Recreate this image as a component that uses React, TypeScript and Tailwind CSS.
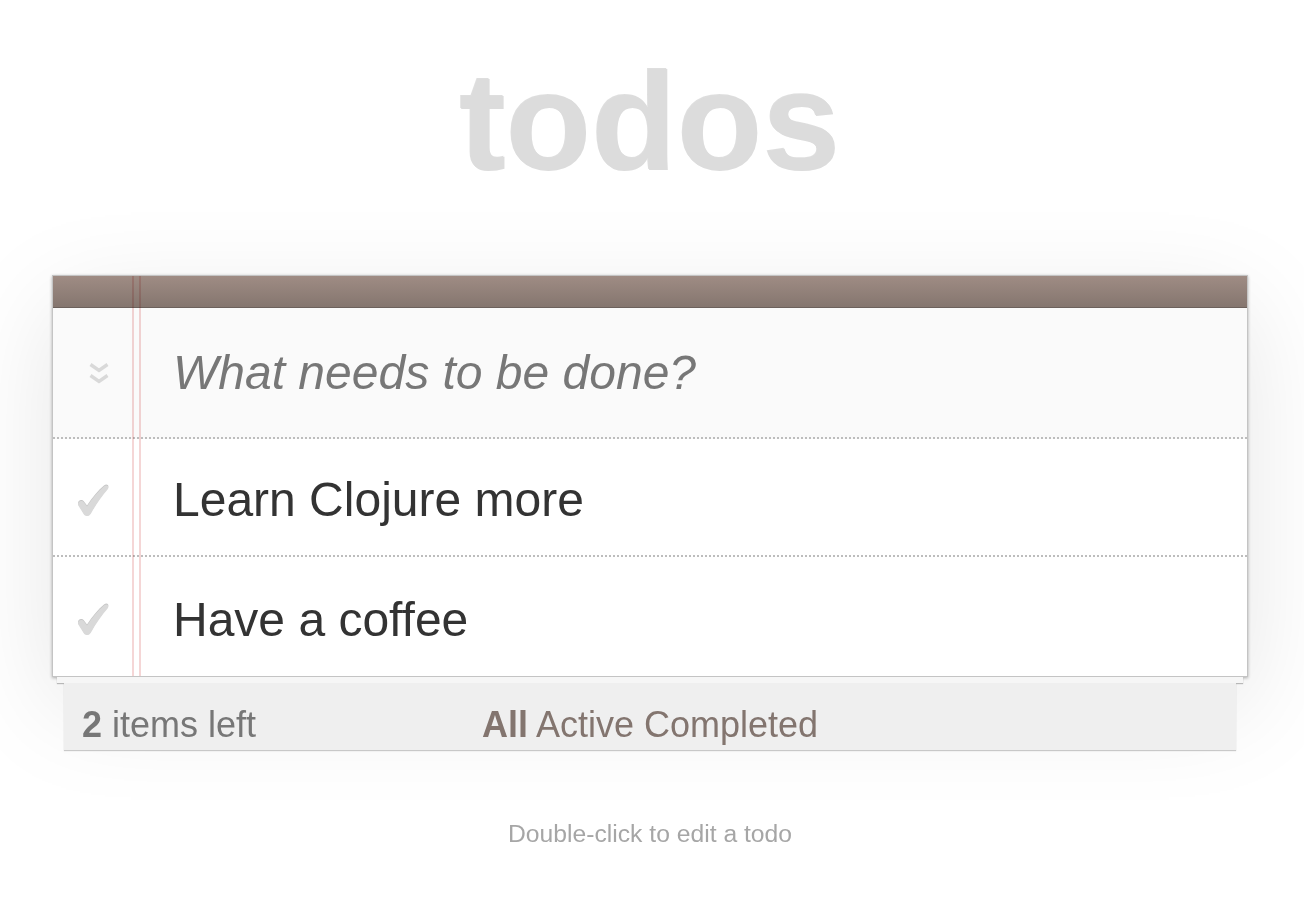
import { useState } from "react"

const todos = [
  { id: 1, title: "Learn Clojure more" },
  { id: 2, title: "Have a coffee" },
]

function ToggleAll() {
  return (
    <svg width="20" height="22" viewBox="0 0 20 22" fill="none" stroke="#d9d9d9" strokeWidth="3.4" strokeLinecap="butt" strokeLinejoin="miter">
      <path d="M1.5 2.5 L10 8.5 L18.5 2.5" />
      <path d="M1.5 13.5 L10 19.5 L18.5 13.5" />
    </svg>
  )
}

const CHECK =
  "M2 22 C1.5 18.5 5.5 16.5 8 19.5 L11 23.5 C16 15.5 22 8.5 28 3.5 C30.5 1.5 33.5 3 32 6 C26 13 19.5 22 15 30.5 C13.2 33.8 9.2 33.8 7.6 31 Z"

function Check() {
  return (
    <svg width="34" height="34" viewBox="0 0 34 34">
      <path d={CHECK} fill="#c6c6c6" transform="translate(0 -1)" />
      <path d={CHECK} fill="#d9d9d9" />
    </svg>
  )
}

function TodoRow({ title, last }: { title: string; last: boolean }) {
  return (
    <li className={`flex items-center ${last ? "h-[119px]" : "h-[118px] border-b-2 border-dotted border-[#bdbdbd]"}`}>
      <div className="w-[80px] flex justify-center pt-[5px]">
        <Check />
      </div>
      <span className="pl-[40px] pt-[6px] text-[48px] text-[#333]">{title}</span>
    </li>
  )
}

export default function App() {
  const [value, setValue] = useState("")
  return (
    <div className="min-h-screen w-full bg-white font-['Liberation_Sans',Arial,sans-serif]">
      <div className="w-[1300px] pt-[52px] pb-[40px] flex flex-col items-center">
        <h1 className="text-[140px] leading-[140px] font-bold text-[#dcdcdc] [text-shadow:-1px_-1px_0_rgba(0,0,0,0.13)]">
          todos
        </h1>

        <div className="mt-[83px] w-[1196px]">
          <section className="relative bg-white border border-[#c4c4c4] shadow-[0_1px_3px_rgba(0,0,0,0.3),0_30px_100px_rgba(0,0,0,0.1)]">
            <div className="h-[32px] bg-gradient-to-b from-[#9f8c84] to-[#85766f] border-b border-[#6c615c]" />
            <div className="flex items-center h-[131px] bg-[#fafafa] border-b-2 border-dotted border-[#bdbdbd]">
              <div className="w-[80px] flex justify-center pl-[12px]">
                <ToggleAll />
              </div>
              <input
                value={value}
                onChange={(e) => setValue(e.target.value)}
                placeholder="What needs to be done?"
                className="flex-1 h-full pl-[40px] bg-transparent outline-none text-[48px] text-[#333] placeholder:italic placeholder:text-[#777]"
              />
            </div>
            <ul>
              {todos.map((t, i) => (
                <TodoRow key={t.id} title={t.title} last={i === todos.length - 1} />
              ))}
            </ul>
            {/* notebook margin lines */}
            <div className="absolute top-0 bottom-0 left-[79px] w-[9px] border-x-2 border-[#f5d6d6] mix-blend-multiply pointer-events-none" />
          </section>

          <div className="relative mx-[5px] h-[6px] bg-[#f6f6f6] shadow-[0_1px_1px_rgba(0,0,0,0.25)]" />
          <footer className="relative mx-[12px] h-[67px] bg-[#efefef] shadow-[0_1px_1px_rgba(0,0,0,0.2)] grid grid-cols-[1fr_auto_1fr] items-start pt-[24px] px-[18px] text-[36px] leading-[36px]">
            <span className="text-[#777]">
              <strong className="font-bold">2</strong> items left
            </span>
            <span className="text-[#83756f]">
              <strong className="font-bold">All</strong> Active Completed
            </span>
            <span />
          </footer>
        </div>

        <p className="mt-[70px] text-[24.7px] leading-[28px] text-[#a6a6a6]">Double-click to edit a todo</p>
      </div>
    </div>
  )
}
